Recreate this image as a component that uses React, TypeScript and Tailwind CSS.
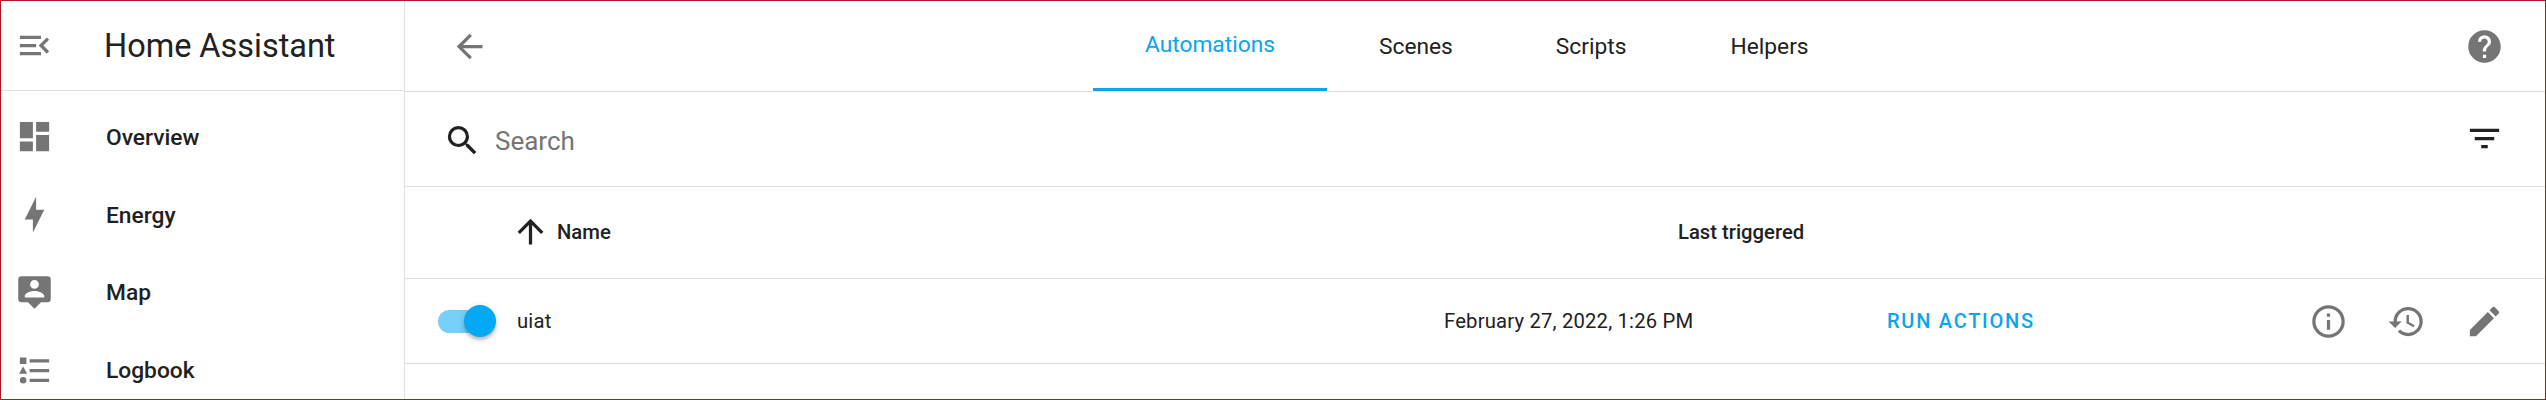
import React from "react";

const ICONS = {
  menuOpen:
    "M21,15.61L19.59,17L14.58,12L19.59,7L21,8.39L17.44,12L21,15.61M3,6H16V8H3V6M3,13V11H13V13H3M3,18V16H16V18H3Z",
  dashboard: "M13,3V9H21V3M13,21H21V11H13M3,21H11V15H3M3,13H11V3H3V13Z",
  bolt: "M11 15H6L13 1V9H18L11 23V15Z",
  account:
    "M20,2H4A2,2 0 0,0 2,4V16A2,2 0 0,0 4,18H8L12,22L16,18H20A2,2 0 0,0 22,16V4A2,2 0 0,0 20,2M12,4.3C13.5,4.3 14.7,5.5 14.7,7C14.7,8.5 13.5,9.7 12,9.7C10.5,9.7 9.3,8.5 9.3,7C9.3,5.5 10.5,4.3 12,4.3M18,15H6V14.1C6,12.1 10,11 12,11C14,11 18,12.1 18,14.1V15Z",
  list: "M5,9.5L7.5,14H2.5L5,9.5M3,4H7V8H3V4M5,20A2,2 0 0,0 7,18A2,2 0 0,0 5,16A2,2 0 0,0 3,18A2,2 0 0,0 5,20M9,5V7H21V5H9M9,19H21V17H9V19M9,11V13H21V11H9Z",
  arrowLeft:
    "M20,11V13H8L13.5,18.5L12.08,19.92L4.16,12L12.08,4.08L13.5,5.5L8,11H20Z",
  magnify:
    "M9.5,3A6.5,6.5 0 0,1 16,9.5C16,11.11 15.41,12.59 14.44,13.73L14.71,14H15.5L20.5,19L19,20.5L14,15.5V14.71L13.73,14.44C12.59,15.41 11.11,16 9.5,16A6.5,6.5 0 0,1 3,9.5A6.5,6.5 0 0,1 9.5,3M9.5,5C7,5 5,7 5,9.5C5,12 7,14 9.5,14C12,14 14,12 14,9.5C14,7 12,5 9.5,5Z",
  arrowUp:
    "M13,20H11V8L5.5,13.5L4.08,12.08L12,4.16L19.92,12.08L18.5,13.5L13,8V20Z",
  help: "M15.07,11.25L14.17,12.17C13.45,12.89 13,13.5 13,15H11V14.5C11,13.39 11.45,12.39 12.17,11.67L13.41,10.41C13.78,10.05 14,9.55 14,9C14,7.89 13.1,7 12,7A2,2 0 0,0 10,9H8A4,4 0 0,1 12,5A4,4 0 0,1 16,9C16,9.88 15.64,10.67 15.07,11.25M13,19H11V17H13M12,2A10,10 0 0,0 2,12A10,10 0 0,0 12,22A10,10 0 0,0 22,12C22,6.47 17.5,2 12,2Z",
  filter: "M6,13H18V11H6M3,6V8H21V6M10,18H14V16H10V18Z",
  info: "M11,9H13V7H11M12,20C7.59,20 4,16.41 4,12C4,7.59 7.59,4 12,4C16.41,4 20,7.59 20,12C20,16.41 16.41,20 12,20M12,2A10,10 0 0,0 2,12A10,10 0 0,0 12,22A10,10 0 0,0 22,12A10,10 0 0,0 12,2M11,17H13V11H11V17Z",
  history:
    "M13.5,8H12V13L16.28,15.54L17,14.33L13.5,12.25V8M13,3A9,9 0 0,0 4,12H1L4.96,16.03L9,12H6A7,7 0 0,1 13,5A7,7 0 0,1 20,12A7,7 0 0,1 13,19C11.07,19 9.32,18.21 8.06,16.94L6.64,18.36C8.27,20 10.5,21 13,21A9,9 0 0,0 22,12A9,9 0 0,0 13,3",
  pencil:
    "M20.71,7.04C21.1,6.65 21.1,6 20.71,5.63L18.37,3.29C18,2.9 17.35,2.9 16.96,3.29L15.12,5.12L18.87,8.87M3,17.25V21H6.75L17.81,9.93L14.06,6.18L3,17.25Z",
};

function Icon({ name, className = "text-[#757575]" }: { name: keyof typeof ICONS; className?: string }) {
  return (
    <svg viewBox="0 0 24 24" className={`size-[39px] shrink-0 fill-current ${className}`} aria-hidden="true">
      <path d={ICONS[name]} />
    </svg>
  );
}

const NAV: { label: string; icon: keyof typeof ICONS; pad: string }[] = [
  { label: "Overview", icon: "dashboard", pad: "pt-[3px]" },
  { label: "Energy", icon: "bolt", pad: "pt-[3px]" },
  { label: "Map", icon: "account", pad: "pt-[2px]" },
  { label: "Logbook", icon: "list", pad: "pt-[2px]" },
];

function Sidebar() {
  return (
    <aside className="flex w-[404px] shrink-0 flex-col border-r border-[#e0e0e0]">
      <div className="flex h-[90px] shrink-0 items-center border-b border-[#e0e0e0] pl-[14px]">
        <Icon name="menuOpen" />
        <h1 className="ml-[50px] text-[32.5px] leading-[40px] font-normal tracking-[-0.03px]">Home Assistant</h1>
      </div>
      <nav className="flex flex-col pt-[6px]">
        {NAV.map((item) => (
          <a key={item.label} className="flex h-[78px] shrink-0 items-center pl-[14px]">
            <Icon name={item.icon} />
            <span className={`ml-[52px] text-[22.75px] leading-[32px] font-medium ${item.pad}`}>{item.label}</span>
          </a>
        ))}
      </nav>
    </aside>
  );
}

function Toolbar() {
  return (
    <header className="flex h-[91px] shrink-0 border-b border-[#e0e0e0]">
      <div className="flex w-[688px] items-center pl-[45px]">
        <Icon name="arrowLeft" />
      </div>
      <div className="flex flex-1 text-[22.75px] leading-[32px]">
        <div className="flex w-[234px] items-center justify-center border-b-[3px] border-[#14a3e6] text-[#0aa5ee]">
          Automations
        </div>
        <div className="flex items-center pr-[51px] pl-[52px] pt-[2px]">Scenes</div>
        <div className="flex items-center px-[52px] pt-[2px]">Scripts</div>
        <div className="flex items-center px-[52px] pt-[2px]">Helpers</div>
      </div>
      <div className="flex items-center pr-[41px]">
        <Icon name="help" />
      </div>
    </header>
  );
}

function Toggle() {
  return (
    <div className="flex h-[23px] w-[52px] shrink-0 items-center rounded-full bg-[#76d0fa]">
      <div className="ml-[26px] size-[32px] shrink-0 rounded-full bg-[#03a9f4] shadow-[0_3px_3px_rgba(0,0,0,0.2),0_2px_8px_rgba(0,0,0,0.12)]" />
    </div>
  );
}

export default function App() {
  return (
    <div className="flex h-[400px] w-[2546px] overflow-hidden border border-[#b01625] bg-white font-['Roboto',sans-serif] text-[#212121]">
      <Sidebar />
      <main className="flex min-w-0 flex-1 flex-col">
        <Toolbar />
        <div className="flex h-[95px] shrink-0 items-center border-b border-[#e0e0e0] pr-[41px] pl-[38px]">
          <div className="flex flex-1 items-center pt-[2px]">
            <Icon name="magnify" className="text-[#212121]" />
            <span className="ml-[13px] pt-[2px] text-[26px] leading-[34px] text-[#757575]">Search</span>
          </div>
          <div className="pb-[2px]">
            <Icon name="filter" className="text-[#212121]" />
          </div>
        </div>
        <div className="flex h-[92px] shrink-0 items-center border-b border-[#e0e0e0] pb-[2px] text-[20.25px] leading-[30px] font-medium">
          <div className="flex w-[1273px] items-center pl-[106px]">
            <Icon name="arrowUp" className="text-[#212121]" />
            <span className="ml-[7px]">Name</span>
          </div>
          <div>Last triggered</div>
        </div>
        <div className="flex h-[85px] shrink-0 items-center border-b border-[#e0e0e0] pr-[41px] text-[20.25px] leading-[30px] tracking-[0.18px]">
          <div className="flex w-[1039px] items-center pl-[33px]">
            <Toggle />
            <span className="ml-[27px]">uiat</span>
          </div>
          <div className="w-[443px]">February 27, 2022, 1:26 PM</div>
          <div className="flex-1 text-[20px] font-medium tracking-[0.087em] text-[#0aa5ee]">RUN ACTIONS</div>
          <div className="flex gap-[39px]">
            <Icon name="info" />
            <Icon name="history" />
            <Icon name="pencil" />
          </div>
        </div>
      </main>
    </div>
  );
}
